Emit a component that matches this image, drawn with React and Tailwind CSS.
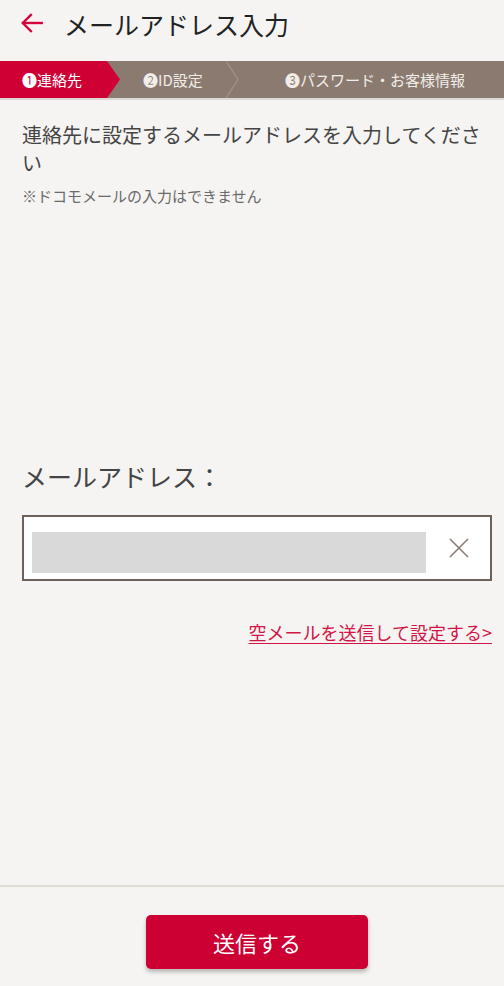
const font = { fontFamily: '"Noto Sans CJK JP", "Noto Sans", "DejaVu Sans", sans-serif' };

const BackArrow = () => (
  <svg width="26" height="26" viewBox="0 0 24 24" fill="none" stroke="#d4003a" strokeWidth="2.2" strokeLinecap="square">
    <path d="M21 12H4" />
    <path d="M11 4.5L3.5 12L11 19.5" />
  </svg>
);

const ClearIcon = () => (
  <svg width="22" height="22" viewBox="0 0 22 22" fill="none" stroke="#8a7b72" strokeWidth="1.6">
    <path d="M2 2L20 20M20 2L2 20" />
  </svg>
);

function Steps() {
  return (
    <div className="relative flex h-[37px] bg-[#8a7a70] text-[15px] leading-none border-b-2 border-[#dcd8d2] box-content">
      <div className="absolute left-0 top-0 h-full w-[120px] bg-[#cf0034] [clip-path:polygon(0_0,107px_0,120px_50%,107px_100%,0_100%)]" />
      <svg className="absolute left-[225px] top-0" width="14" height="37" viewBox="0 0 14 37" fill="none" stroke="#a3958c" strokeWidth="1.2">
        <path d="M1 0L13 18.5L1 37" />
      </svg>
      <div className="relative flex w-[120px] items-center pl-[22px] text-white">❶連絡先</div>
      <div className="relative flex w-[120px] items-center pl-[23px] text-[#f1ede9]">❷ID設定</div>
      <div className="relative flex flex-1 items-center pl-[45px] text-[#f1ede9]">❸パスワード・お客様情報</div>
    </div>
  );
}

export default function App() {
  return (
    <div className="flex h-[986px] w-[504px] flex-col bg-[#f5f4f2] text-[#333]" style={font}>
      {/* header */}
      <div className="flex h-[61px] items-start pt-[6px]">
        <div className="flex w-[66px] justify-center pt-[4px] -ml-[1px]">
          <BackArrow />
        </div>
        <h1 className="text-[25px] leading-[36px] text-[#222] -ml-[1px]">メールアドレス入力</h1>
      </div>

      <Steps />

      {/* body */}
      <div className="flex-1 pl-[22px] pr-[12px]">
        <p className="mt-[21px] text-[20px] leading-[28px] text-[#444]">
          連絡先に設定するメールアドレスを入力してください
        </p>
        <p className="mt-[9px] text-[15px] leading-[20px] text-[#6a6a6a]">※ドコモメールの入力はできません</p>

        <p className="mt-[253px] text-[25px] leading-[34px] text-[#444]">メールアドレス：</p>

        <div className="mt-[22px] flex h-[66px] items-center border-2 border-[#6d625b] bg-white pl-[8px] pr-[20px]">
          <div className="mb-[6px] h-[41px] w-[394px] self-end bg-[#d9d9d9]" />
          <div className="ml-auto flex items-center">
            <ClearIcon />
          </div>
        </div>

        <div className="mt-[38px] flex justify-end">
          <a className="text-[18px] leading-[26px] text-[#d31446] underline underline-offset-[3px]">
            空メールを送信して設定する&gt;
          </a>
        </div>
      </div>

      {/* footer */}
      <div className="flex h-[101px] justify-center border-t-2 border-[#e0ddd3] pt-[28px] pl-[10px]">
        <button className="h-[54px] w-[222px] rounded-[5px] bg-[#cc0033] text-[22px] leading-none text-white shadow-[0_3px_4px_rgba(0,0,0,0.25)]">
          送信する
        </button>
      </div>
    </div>
  );
}
